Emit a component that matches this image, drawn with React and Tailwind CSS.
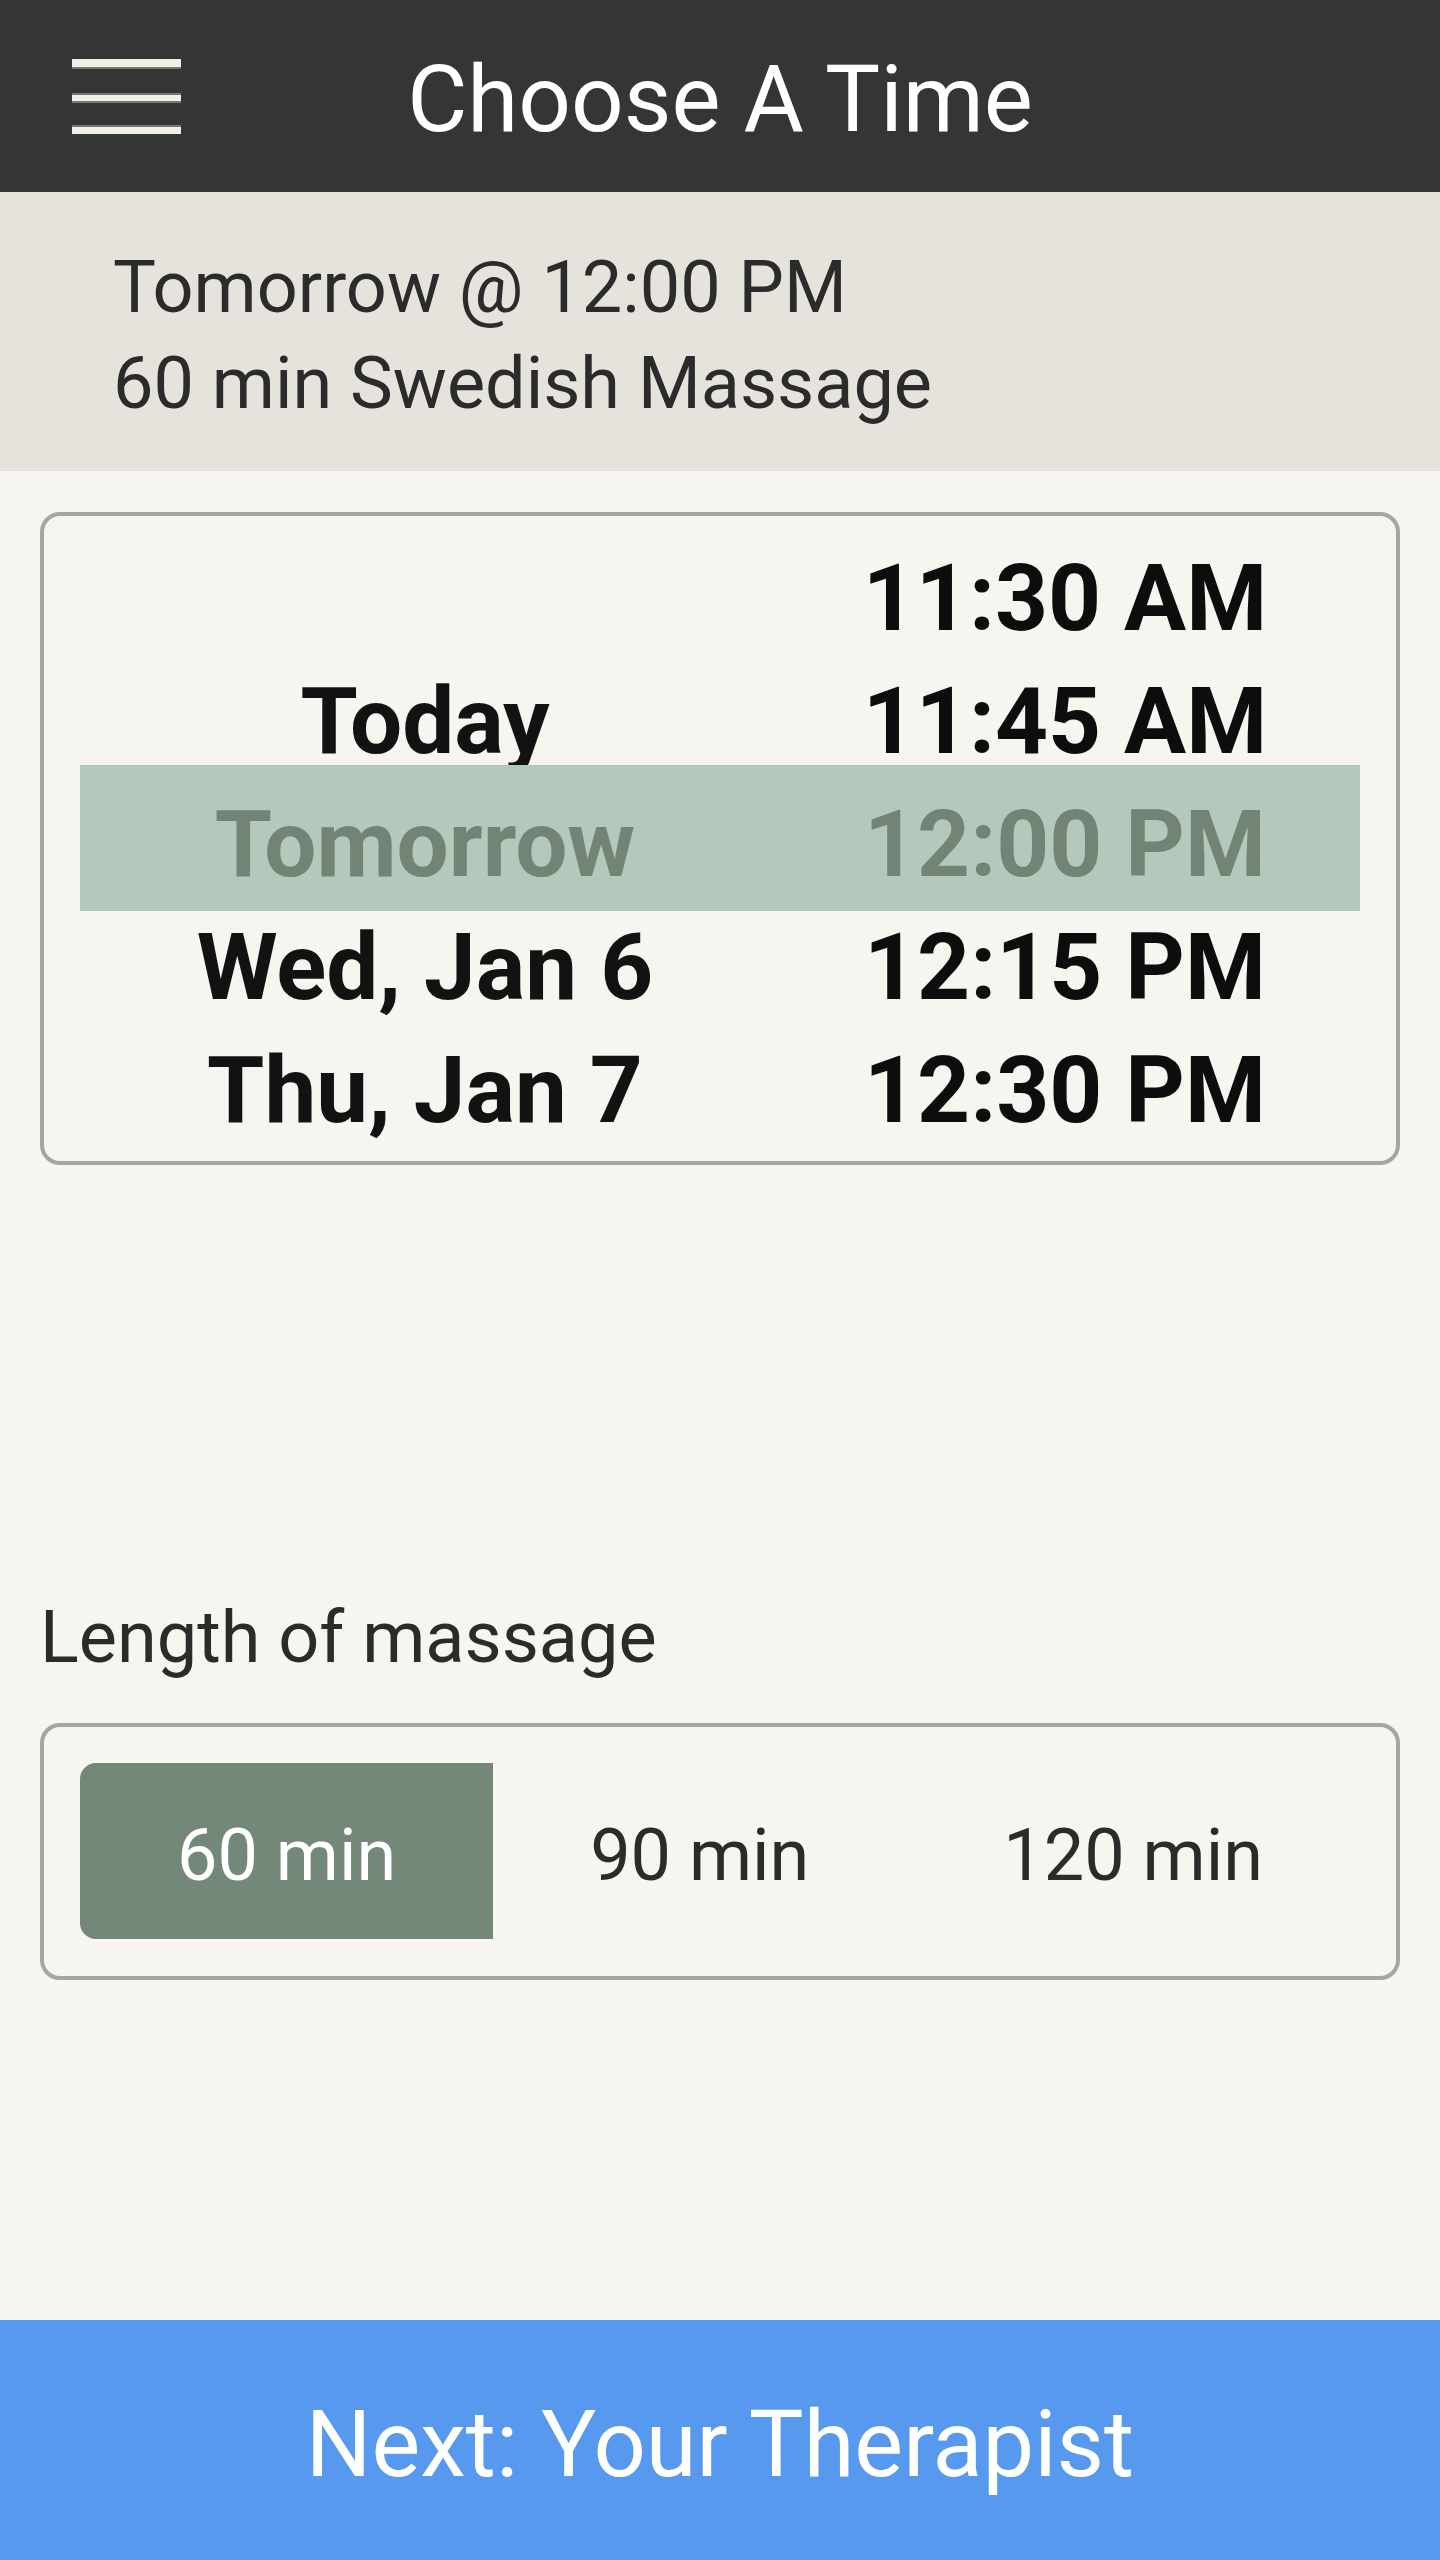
import { useState } from "react";

const rows = [
  { date: "", time: "11:30 AM" },
  { date: "Today", time: "11:45 AM" },
  { date: "Tomorrow", time: "12:00 PM" },
  { date: "Wed, Jan 6", time: "12:15 PM" },
  { date: "Thu, Jan 7", time: "12:30 PM" },
];

const lengths = ["60 min", "90 min", "120 min"];

const App = () => {
  const [selected, setSelected] = useState(2);
  const [length, setLength] = useState(0);

  return (
    <div className="w-[1440px] min-h-[2560px] bg-[#f7f5ef] flex flex-col font-['Roboto',sans-serif]">
      {/* Header */}
      <div className="h-[192px] bg-[#353535] grid grid-cols-[1fr_auto_1fr]">
        <div className="pl-[72px] pt-[59px]">
          <div className="w-[109px] flex flex-col">
            <div className="h-[10px] bg-[#f4efe6] border-b-2 border-[#7a7874]" />
            <div className="h-[10px] mt-[24px] bg-[#f4efe6] border-y-2 border-[#7a7874]" />
            <div className="h-[9px] mt-[22px] bg-[#f4efe6] border-t-2 border-[#7a7874]" />
          </div>
        </div>
        <h1 className="pt-[54px] text-[92.5px] leading-none text-white">Choose A Time</h1>
        <div />
      </div>

      {/* Summary */}
      <div className="h-[279px] bg-[#e6e3dc] pl-[113px] pt-[48px] text-[72px] leading-[96px] text-[#2b2b2b]">
        <p>Tomorrow @ 12:00 PM</p>
        <p>60 min Swedish Massage</p>
      </div>

      {/* Time picker */}
      <div className="mx-[40px] mt-[41px] h-[653px] border-4 border-[#a6a59f] rounded-[20px] px-[36px] pt-[21px]">
        {rows.map((row, i) => (
          <div
            key={row.time}
            onClick={() => setSelected(i)}
            className="relative grid grid-cols-[690px_1fr] h-[123px] text-[92.5px] leading-[123px] font-bold text-center cursor-pointer"
          >
            {selected === i && <div className="absolute inset-x-0 top-[-18px] bottom-[-5px] bg-[#b4c8bb]" />}
            <span className={`relative ${selected === i ? "text-[#718476]" : "text-[#121212]"}`}>{row.date}</span>
            <span className={`relative ${selected === i ? "text-[#718476]" : "text-[#0d0d0d]"}`}>{row.time}</span>
          </div>
        ))}
      </div>

      {/* Length */}
      <p className="mt-[437px] pl-[40px] text-[72px] leading-none text-[#2b2b2b]">Length of massage</p>
      <div className="mx-[40px] mt-[49px] h-[257px] border-4 border-[#a6a59f] rounded-[20px] px-[36px] py-[36px] flex">
        {lengths.map((l, i) => (
          <button
            key={l}
            onClick={() => setLength(i)}
            className={`flex-auto h-[176px] pt-[10px] flex items-center justify-center text-[72px] leading-none ${
              length === i ? "bg-[#738878] text-white rounded-l-[16px]" : "text-[#2b2b2b]"
            }`}
          >
            {l}
          </button>
        ))}
      </div>

      {/* Next */}
      <button className="mt-auto h-[240px] bg-[#5699ee] pt-[10px] flex items-center justify-center text-[92px] leading-none text-white">
        Next: Your Therapist
      </button>
    </div>
  );
};

export default App;
